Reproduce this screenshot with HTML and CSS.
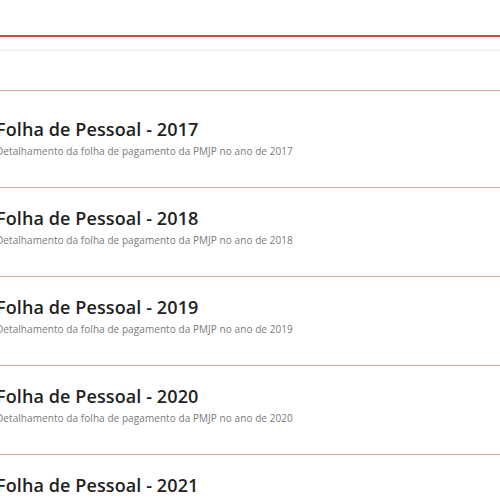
FILE: index.html
```html
<!DOCTYPE html>
<html lang="pt-BR">
<head>
<meta charset="utf-8">
<title>Folha de Pessoal</title>
<link rel="stylesheet" href="styles.css">
</head>
<body>
<div class="page">
  <header class="topbar"></header>
  <div class="subbar"></div>
  <div class="filters"></div>
  <ul class="list">
    <li class="item">
      <h2 class="item-title">Folha de Pessoal - 2017</h2>
      <p class="item-desc">Detalhamento da folha de pagamento da PMJP no ano de 2017</p>
    </li>
    <li class="item">
      <h2 class="item-title">Folha de Pessoal - 2018</h2>
      <p class="item-desc">Detalhamento da folha de pagamento da PMJP no ano de 2018</p>
    </li>
    <li class="item">
      <h2 class="item-title">Folha de Pessoal - 2019</h2>
      <p class="item-desc">Detalhamento da folha de pagamento da PMJP no ano de 2019</p>
    </li>
    <li class="item">
      <h2 class="item-title">Folha de Pessoal - 2020</h2>
      <p class="item-desc">Detalhamento da folha de pagamento da PMJP no ano de 2020</p>
    </li>
    <li class="item">
      <h2 class="item-title">Folha de Pessoal - 2021</h2>
      <p class="item-desc">Detalhamento da folha de pagamento da PMJP no ano de 2021</p>
    </li>
  </ul>
</div>
</body>
</html>
```
FILE: styles.css
```css
html, body {
  margin: 0;
  padding: 0;
  background: #ffffff;
  overflow: hidden;
}
.page {
  width: 500px;
  height: 500px;
  overflow: hidden;
  font-family: "Open Sans", "Noto Sans", sans-serif;
}
.topbar {
  height: 35px;
  border-bottom: 2px solid #cf4a45;
  box-shadow: 0 1px 1px rgba(230, 120, 110, 0.35);
}
.subbar {
  height: 13px;
  background: #fefcfc;
  border-bottom: 1px solid #ececec;
}
.filters {
  height: 39px;
  border-bottom: 1px solid #d9aaa6;
}
.list {
  list-style: none;
  margin: 0;
  padding: 8px 0 0 0;
}
.item {
  padding: 19px 0 29px 0;
  margin-left: -4px;
  border-bottom: 1px solid #dca29c;
}
.item-title {
  margin: 0;
  font-size: 18px;
  line-height: 22px;
  font-weight: 600;
  color: #222222;
  letter-spacing: 0.1px;
}
.item-desc {
  margin: 4px 0 0 0;
  font-size: 10px;
  line-height: 14px;
  color: #7a7a7a;
  letter-spacing: 0.07px;
}
```
